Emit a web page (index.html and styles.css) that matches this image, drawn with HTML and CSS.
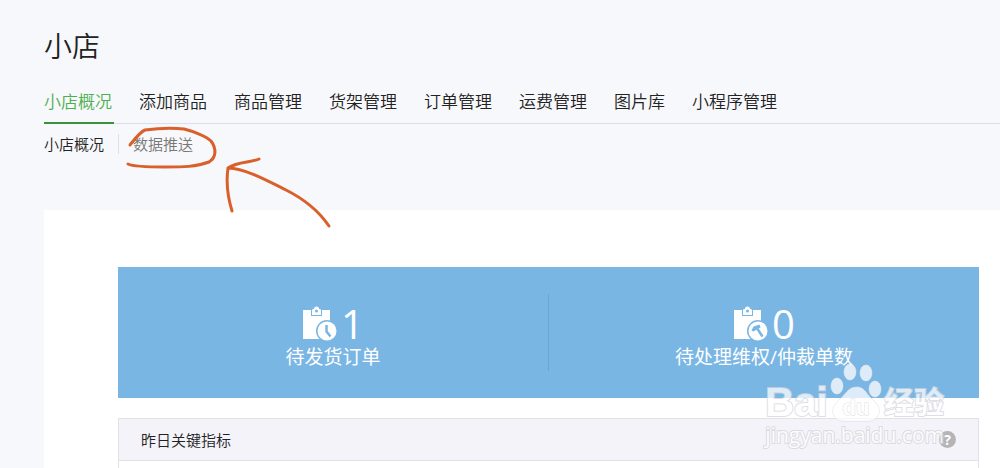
FILE: index.html
```html
<!DOCTYPE html>
<html lang="zh-CN">
<head>
    <meta charset="UTF-8">
    <meta name="viewport" content="width=device-width, initial-scale=1.0">
    <title>小店</title>
    <link rel="stylesheet" href="styles.css">
</head>
<body>
    <!-- 页头 -->
    <header class="header">
        <h1>小店</h1>
        <nav class="tabs">
            <a class="active" href="#overview">小店概况</a>
            <a href="#add">添加商品</a>
            <a href="#goods">商品管理</a>
            <a href="#shelf">货架管理</a>
            <a href="#orders">订单管理</a>
            <a href="#freight">运费管理</a>
            <a href="#images">图片库</a>
            <a href="#miniapp">小程序管理</a>
        </nav>
        <nav class="sub-tabs">
            <a class="active" href="#overview">小店概况</a>
            <a href="#push">数据推送</a>
        </nav>
    </header>

    <!-- 内容 -->
    <main class="panel">
        <section class="banner">
            <div class="stat">
                <div class="stat-top">
                    <svg class="stat-icon" width="36" height="36" viewBox="0 0 36 36">
                        <path fill="#fff" d="M1 4h27v29H1z"/>
                        <path fill="#7ab6e4" d="M9 4h11v6H9z"/>
                        <path fill="#fff" fill-rule="evenodd" d="M10 9V4q0-1 2-1a2.500 2.500 0 0 1 5 0q2 0 2 1v5zM14.500 3.500a1.500 1.500 0 1 0 0 3a1.500 1.500 0 0 0 0-3z"/>
                        <circle cx="25" cy="25" r="11" fill="#7ab6e4"/>
                        <circle cx="25" cy="25" r="9.500" fill="#fff"/>
                        <path d="M24.500 19v6.500l4 5" fill="none" stroke="#7ab6e4" stroke-width="2.500"/>
                    </svg>
                    <span class="stat-num">1</span>
                </div>
                <div class="stat-label">待发货订单</div>
            </div>
            <div class="stat">
                <div class="stat-top">
                    <svg class="stat-icon" width="36" height="36" viewBox="0 0 36 36">
                        <path fill="#fff" d="M1 4h27v29H1z"/>
                        <path fill="#7ab6e4" d="M9 4h11v6H9z"/>
                        <path fill="#fff" fill-rule="evenodd" d="M10 9V4q0-1 2-1a2.500 2.500 0 0 1 5 0q2 0 2 1v5zM14.500 3.500a1.500 1.500 0 1 0 0 3a1.500 1.500 0 0 0 0-3z"/>
                        <circle cx="25" cy="25" r="11" fill="#7ab6e4"/>
                        <circle cx="25" cy="25" r="9.500" fill="#fff"/>
                        <path d="M18.500 24.500l2-4 6-2 1 3-7 4z" fill="#7ab6e4"/>
                        <path d="M24.500 23l5 7.500" fill="none" stroke="#7ab6e4" stroke-width="2.500"/>
                    </svg>
                    <span class="stat-num">0</span>
                </div>
                <div class="stat-label">待处理维权/仲裁单数</div>
            </div>
        </section>

        <section class="card">
            <div class="card-header">
                <h2>昨日关键指标</h2>
                <button class="help" type="button" aria-label="帮助">?</button>
            </div>
        </section>
    </main>

    <!-- 手绘标注 -->
    <svg class="marks" width="320" height="120" viewBox="100 120 320 120">
        <path d="M130 145C134 140 140 132 145 130C160 128 175 128 184 129C192 131 206 136 211 141C217 149 216 158 209 162C196 167 183 167 165 167C150 167 134 167 128 164"/>
        <path d="M329 226C318 210 304 199 286 190C264 179 246 169 228 168C226 182 228 198 232 211M228 168C238 161 250 163 259 159"/>
    </svg>

    <!-- 水印 -->
    <div class="watermark">
        <div class="wm-top">
            <span class="wm-bai">Bai</span>
            <svg class="wm-paw" width="52" height="60" viewBox="0 0 52 60">
                <ellipse cx="7" cy="24" rx="6" ry="8"/>
                <ellipse cx="20" cy="10" rx="6" ry="8"/>
                <ellipse cx="36" cy="11" rx="6" ry="8"/>
                <ellipse cx="45" cy="27" rx="6" ry="8"/>
                <path d="M27 25c6 0 8 4 12 9s11 9 10 16c-1 8-8 9-14 9H16C8 59 3 56 3 49c0-7 7-11 11-16s7-8 13-8z"/>
                <text x="26" y="53" text-anchor="middle">du</text>
            </svg>
            <span class="wm-cn">经验</span>
        </div>
        <div class="wm-url">jingyan.baidu.com</div>
    </div>
</body>
</html>
```
FILE: styles.css
```css
* {
    box-sizing: border-box;
}

body {
    margin: 0;
    min-height: 100vh;
    display: flex;
    flex-direction: column;
    position: relative;
    background-color: #f7f8fb;
    color: #222;
    font-family: "Open Sans", "Noto Sans CJK SC", sans-serif;
    font-weight: 350;
}

a {
    color: inherit;
    text-decoration: none;
}

/* 页头 */
.header {
    padding: 26px 0 0 44px;
}

h1 {
    margin: 0;
    font-size: 28px;
    line-height: 40px;
    font-weight: 350;
    color: #222;
}

.tabs {
    display: flex;
    gap: 25px;
    margin-top: 20px;
    border-bottom: 1px solid #dcdfe4;
    font-size: 17px;
    line-height: 32px;
}

.tabs a {
    padding: 0 2px 4px 0;
    margin-bottom: -1px;
    border-bottom: 2px solid transparent;
    white-space: nowrap;
}

.tabs .active {
    color: #4caf50;
    border-bottom-color: #3a913d;
}

.sub-tabs {
    display: flex;
    padding: 10px 0;
    font-size: 15px;
    line-height: 20px;
    color: #777;
}

.sub-tabs a + a {
    padding-left: 14px;
    margin-left: 14px;
    border-left: 1px solid #dcdfe4;
}

.sub-tabs .active {
    color: #222;
}

/* 内容 */
.panel {
    flex: 1;
    display: flex;
    flex-direction: column;
    margin: 46px 0 0 44px;
    padding: 57px 21px 0 74px;
    background-color: #fff;
}

.banner {
    display: flex;
    padding: 27px 0;
    background-color: #7ab6e4;
    color: #fff;
}

.stat {
    flex: 1;
    height: 77px;
    text-align: center;
}

.stat + .stat {
    border-left: 1px solid #6ba5d2;
}

.stat-top {
    display: flex;
    justify-content: center;
    align-items: center;
    gap: 3px;
    padding-top: 10px;
    height: 50px;
}

.stat-num {
    font-size: 40px;
    line-height: 40px;
    font-weight: 400;
}

.stat-label {
    font-size: 19px;
    line-height: 26px;
    font-weight: 400;
}

.card {
    flex: 1;
    margin-top: 20px;
    border: 1px solid #e2e2e6;
    border-bottom: none;
}

.card-header {
    display: flex;
    justify-content: space-between;
    align-items: center;
    height: 42px;
    padding: 0 22px;
    background-color: #f4f3f9;
    border-bottom: 1px solid #e2e2e6;
}

h2 {
    margin: 0;
    font-size: 15px;
    line-height: 20px;
    font-weight: 350;
}

.help {
    width: 17px;
    height: 17px;
    padding: 0;
    border: none;
    border-radius: 50%;
    background-color: #b5b5b8;
    color: #fff;
    font: bold 14px/17px "Open Sans", sans-serif;
}

/* 手绘标注 */
.marks {
    position: absolute;
    left: 100px;
    top: 120px;
    fill: none;
    stroke: #d9602a;
    stroke-width: 3;
    stroke-linecap: round;
    stroke-linejoin: round;
    pointer-events: none;
}

/* 水印 */
.watermark {
    position: absolute;
    right: 56px;
    bottom: 20px;
    color: #fff;
    opacity: 0.75;
    -webkit-text-stroke: 2px #d4d4da;
    paint-order: stroke fill;
    pointer-events: none;
}

.wm-top {
    display: flex;
    justify-content: space-between;
    align-items: flex-end;
}

.wm-bai {
    font: bold 40px/40px "Liberation Sans", sans-serif;
}

.wm-paw {
    fill: #fff;
    stroke: #d4d4da;
}

.wm-paw text {
    font: bold 22px "Liberation Sans", sans-serif;
}

.wm-cn {
    font-size: 30px;
    line-height: 40px;
    font-weight: 700;
}

.wm-url {
    font-size: 21px;
    line-height: 26px;
    font-weight: 400;
}
```
